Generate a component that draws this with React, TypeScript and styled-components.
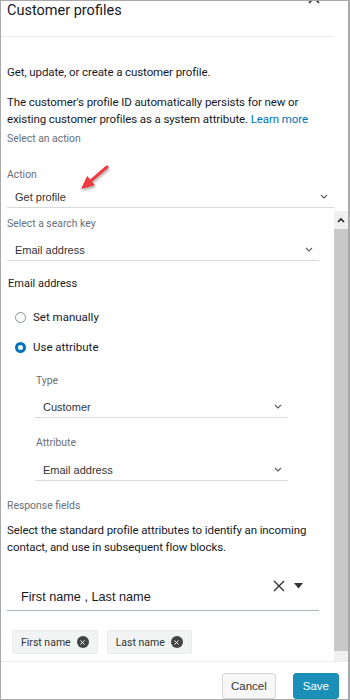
import styled, { createGlobalStyle } from 'styled-components';

const GlobalStyle = createGlobalStyle`
  html, body {
    margin: 0;
    padding: 0;
    background: #ffffff;
  }
  body {
    font-family: Roboto, 'Liberation Sans', Arial, sans-serif;
    color: #16191f;
  }
`;

const Panel = styled.div`
  position: relative;
  box-sizing: border-box;
  width: 350px;
  height: 700px;
  border: 1px solid #a9a9a9;
  border-right-width: 2px;
  display: flex;
  flex-direction: column;
  overflow: hidden;
  background: #fff;
`;

const Header = styled.div`
  position: relative;
  height: 36px;
  margin-right: 14px;
  border-bottom: 1px solid #eaeded;
  padding: 1px 0 0 6px;
  box-sizing: border-box;
`;

const Title = styled.h1`
  margin: 0;
  font-family: Roboto, 'Liberation Sans', Arial, sans-serif;
  font-weight: 400;
  font-size: 14.5px;
  line-height: 18px;
  color: #16191f;
`;

const Close = styled.svg`
  position: absolute;
  top: -9px;
  right: 14px;
`;

const Intro = styled.div`
  padding: 0 14px 0 6px;
`;

const Para = styled.p<{ $top: number }>`
  margin: ${({ $top }) => $top}px 0 0;
  font-size: 11.5px;
  letter-spacing: -0.1px;
  line-height: 17px;
  color: #16191f;
`;

const Link = styled.a`
  color: #0073bb;
  text-decoration: none;
`;

const Caption = styled.div<{ $top: number; $indent?: number }>`
  margin: ${({ $top }) => $top}px 0 0 ${({ $indent }) => $indent ?? 0}px;
  font-size: 10.4px;
  line-height: 14px;
  color: #687078;
`;

const SelectRow = styled.div<{ $top: number; $indent?: number; $width?: number }>`
  display: flex;
  align-items: center;
  justify-content: space-between;
  box-sizing: border-box;
  margin: ${({ $top }) => $top}px 0 0 ${({ $indent }) => $indent ?? 0}px;
  width: ${({ $width }) => ($width ? `${$width}px` : 'auto')};
  height: 22px;
  padding: 0 6px 0 8px;
  border-bottom: 1px solid #d5dbdb;
  font-family: 'Liberation Sans', Arial, sans-serif;
  font-size: 11px;
  color: #333;
`;

const ScrollArea = styled.div`
  flex: 1;
  display: flex;
  min-height: 0;
  margin-top: 3px;
`;

const ScrollContent = styled.div`
  flex: 1;
  padding: 0 15px 0 6px;
`;

const ScrollBar = styled.div`
  width: 14px;
  display: flex;
  flex-direction: column;
  background: #f0f0f0;
`;

const ScrollBtn = styled.div`
  height: 18px;
  display: flex;
  align-items: center;
  justify-content: center;
`;

const Thumb = styled.div`
  height: 422px;
  background: #c8c8c8;
`;

const SectionTitle = styled.div<{ $top: number }>`
  margin: ${({ $top }) => $top}px 0 0 1px;
  font-size: 11px;
  line-height: 16px;
  color: #16191f;
`;

const RadioRow = styled.label<{ $top: number }>`
  display: flex;
  align-items: center;
  gap: 7px;
  margin: ${({ $top }) => $top}px 0 0 8px;
  font-size: 11.5px;
  line-height: 16px;
  color: #16191f;
`;

const Radio = styled.span<{ $checked?: boolean }>`
  box-sizing: border-box;
  width: 11px;
  height: 11px;
  border-radius: 50%;
  border: ${({ $checked }) => ($checked ? '3px solid #0073bb' : '1px solid #879596')};
  background: #fff;
`;

const Multi = styled.div`
  display: flex;
  align-items: flex-end;
  justify-content: space-between;
  box-sizing: border-box;
  margin-top: 24px;
  width: 312px;
  height: 31px;
  padding: 0 16px 6px 14px;
  border-bottom: 1px solid #aab7b8;
  font-family: 'Liberation Sans', Arial, sans-serif;
  font-size: 12.7px;
  color: #16191f;
`;

const MultiIcons = styled.div`
  display: flex;
  align-items: center;
  gap: 9px;
  align-self: flex-start;
`;

const Chips = styled.div`
  display: flex;
  gap: 9px;
  margin: 19px 0 0 5px;
`;

const Chip = styled.div`
  display: flex;
  align-items: center;
  gap: 6px;
  height: 22px;
  padding: 0 8px 0 8px;
  background: #f2f3f3;
  border: 1px solid #eaeded;
  border-radius: 2px;
  font-size: 10.5px;
  color: #333;
`;

const ChipX = styled.span`
  width: 12px;
  height: 12px;
  border-radius: 50%;
  background: #444;
  display: flex;
  align-items: center;
  justify-content: center;
`;

const Footer = styled.div`
  height: 38px;
  border-top: 1px solid #eaeded;
  display: flex;
  align-items: flex-start;
  justify-content: flex-end;
  gap: 17px;
  padding: 11px 9px 0 0;
  box-sizing: border-box;
`;

const Button = styled.button<{ $primary?: boolean }>`
  height: 26px;
  padding: 0 ${({ $primary }) => ($primary ? 9 : 8)}px;
  border-radius: 3px;
  font-family: 'Liberation Sans', Arial, sans-serif;
  font-size: 11.5px;
  border: 1px solid ${({ $primary }) => ($primary ? '#1a8db5' : '#d5d5d5')};
  background: ${({ $primary }) => ($primary ? '#1a8fb7' : '#f7f7f7')};
  color: ${({ $primary }) => ($primary ? '#fff' : '#333')};
`;

const Arrow = styled.svg`
  position: absolute;
  left: 74px;
  top: 160px;
  filter: drop-shadow(1px 2px 1px rgba(0, 0, 0, 0.3));
`;

const Chevron = () => (
  <svg width="8" height="5" viewBox="0 0 8 5">
    <path d="M1 1l3 3 3-3" fill="none" stroke="#545b64" strokeWidth="1.1" />
  </svg>
);

const ChipClose = () => (
  <ChipX>
    <svg width="5" height="5" viewBox="0 0 5 5">
      <path d="M0.5 0.5l4 4M4.5 0.5l-4 4" stroke="#fff" strokeWidth="1" />
    </svg>
  </ChipX>
);

function Select({ value, top, indent, width }: { value: string; top: number; indent?: number; width?: number }) {
  return (
    <SelectRow $top={top} $indent={indent} $width={width}>
      <span>{value}</span>
      <Chevron />
    </SelectRow>
  );
}

export default function App() {
  return (
    <>
      <GlobalStyle />
      <Panel>
        <Header>
          <Title>Customer profiles</Title>
          <Close width="12" height="12" viewBox="0 0 12 12">
            <path d="M1 1l10 10M11 1L1 11" stroke="#333" strokeWidth="1.6" />
          </Close>
        </Header>
        <Intro>
          <Para $top={27}>Get, update, or create a customer profile.</Para>
          <Para $top={13}>
            The customer's profile ID automatically persists for new or existing customer profiles as a system
            attribute. <Link href="#">Learn more</Link>
          </Para>
          <Caption $top={4}>Select an action</Caption>
          <Caption $top={22}>Action</Caption>
          <Select value="Get profile" top={4} />
        </Intro>
        <ScrollArea>
          <ScrollContent>
            <Caption $top={6}>Select a search key</Caption>
            <Select value="Email address" top={8} width={312} />
            <SectionTitle $top={15}>Email address</SectionTitle>
            <RadioRow $top={17}>
              <Radio />
              Set manually
            </RadioRow>
            <RadioRow $top={14}>
              <Radio $checked />
              Use attribute
            </RadioRow>
            <Caption $top={19} $indent={29}>Type</Caption>
            <Select value="Customer" top={8} indent={28} width={253} />
            <Caption $top={18} $indent={29}>Attribute</Caption>
            <Select value="Email address" top={9} indent={28} width={253} />
            <Caption $top={18}>Response fields</Caption>
            <Para $top={9}>
              Select the standard profile attributes to identify an incoming contact, and use in subsequent flow blocks.
            </Para>
            <Multi>
              <span>First name , Last name</span>
              <MultiIcons>
                <svg width="12" height="12" viewBox="0 0 12 12">
                  <path d="M1 1l10 10M11 1L1 11" stroke="#333" strokeWidth="1.4" />
                </svg>
                <svg width="9" height="6" viewBox="0 0 9 6">
                  <path d="M0 0h9L4.5 5.5z" fill="#333" />
                </svg>
              </MultiIcons>
            </Multi>
            <Chips>
              <Chip>
                First name
                <ChipClose />
              </Chip>
              <Chip>
                Last name
                <ChipClose />
              </Chip>
            </Chips>
          </ScrollContent>
          <ScrollBar>
            <ScrollBtn>
              <svg width="8" height="5" viewBox="0 0 8 5">
                <path d="M1 4l3-3 3 3" fill="none" stroke="#222" strokeWidth="1.6" />
              </svg>
            </ScrollBtn>
            <Thumb />
          </ScrollBar>
        </ScrollArea>
        <Footer>
          <Button>Cancel</Button>
          <Button $primary>Save</Button>
        </Footer>
        <Arrow width="40" height="34" viewBox="0 0 40 34">
          <path d="M32 6L16 19.6" stroke="#ee3a3f" strokeWidth="3" strokeLinecap="round" />
          <path d="M6 28L19.9 24.2L12.1 15z" fill="#ee3a3f" />
        </Arrow>
      </Panel>
    </>
  );
}
